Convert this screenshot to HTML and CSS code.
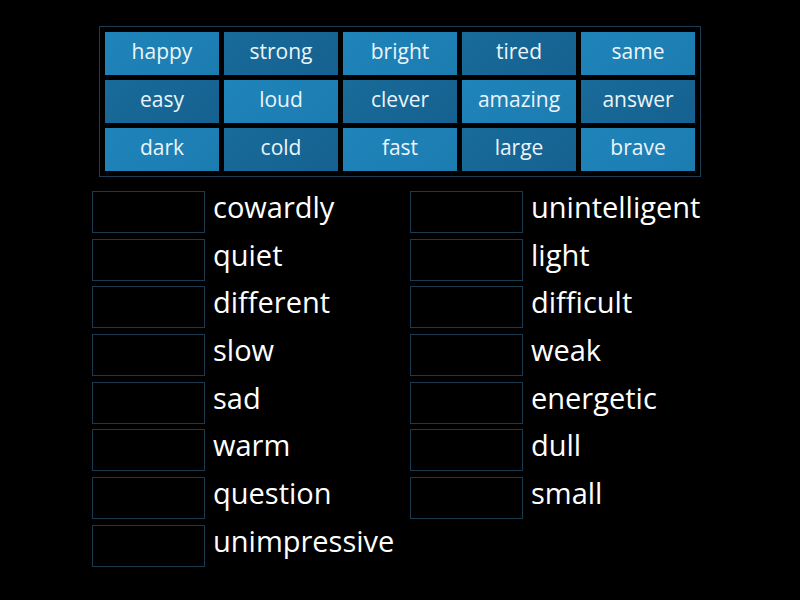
FILE: index.html
```html
<!DOCTYPE html>
<html>
<head>
<meta charset="utf-8">
<link rel="stylesheet" href="styles.css">
</head>
<body>
<div class="bank">
  <div class="tile light">happy</div>
  <div class="tile dark">strong</div>
  <div class="tile light">bright</div>
  <div class="tile dark">tired</div>
  <div class="tile light">same</div>
  <div class="tile dark">easy</div>
  <div class="tile light">loud</div>
  <div class="tile dark">clever</div>
  <div class="tile light">amazing</div>
  <div class="tile dark">answer</div>
  <div class="tile light">dark</div>
  <div class="tile dark">cold</div>
  <div class="tile light">fast</div>
  <div class="tile dark">large</div>
  <div class="tile light">brave</div>
</div>
<div class="answers">
  <div class="col">
    <div class="item"><div class="slot"></div><span class="word">cowardly</span></div>
    <div class="item"><div class="slot"></div><span class="word">quiet</span></div>
    <div class="item"><div class="slot"></div><span class="word">different</span></div>
    <div class="item"><div class="slot"></div><span class="word">slow</span></div>
    <div class="item"><div class="slot"></div><span class="word">sad</span></div>
    <div class="item"><div class="slot"></div><span class="word">warm</span></div>
    <div class="item"><div class="slot"></div><span class="word">question</span></div>
    <div class="item"><div class="slot"></div><span class="word">unimpressive</span></div>
  </div>
  <div class="col">
    <div class="item"><div class="slot"></div><span class="word">unintelligent</span></div>
    <div class="item"><div class="slot"></div><span class="word">light</span></div>
    <div class="item"><div class="slot"></div><span class="word">difficult</span></div>
    <div class="item"><div class="slot"></div><span class="word">weak</span></div>
    <div class="item"><div class="slot"></div><span class="word">energetic</span></div>
    <div class="item"><div class="slot"></div><span class="word">dull</span></div>
    <div class="item"><div class="slot"></div><span class="word">small</span></div>
  </div>
</div>
</body>
</html>
```
FILE: styles.css
```css
html, body {
  margin: 0;
  padding: 0;
  background: #000;
  font-family: "Open Sans", "DejaVu Sans", sans-serif;
  color: #fff;
}
body {
  width: 800px;
  height: 600px;
  overflow: hidden;
}
.bank {
  margin: 26px 0 0 99px;
  width: 590px;
  border: 1px solid #1f3c52;
  padding: 5px;
  display: grid;
  grid-template-columns: repeat(5, 114px);
  grid-auto-rows: 43px;
  gap: 5px;
}
.tile {
  display: flex;
  align-items: center;
  justify-content: center;
  font-size: 21px;
  color: #eaf5fb;
  padding-bottom: 5px;
  box-sizing: border-box;
}
.tile.light {
  background: linear-gradient(135deg, #1f84ba 0%, #1c7cb0 100%);
}
.tile.dark {
  background: linear-gradient(135deg, #196b99 0%, #156190 100%);
}
.answers {
  margin: 14px 0 0 92px;
  display: grid;
  grid-template-columns: 318px 318px;
}
.col {
  display: flex;
  flex-direction: column;
  gap: 5.7px;
}
.item {
  display: flex;
  align-items: center;
  height: 42px;
}
.slot {
  width: 113px;
  height: 42px;
  box-sizing: border-box;
  border: 1px solid #1c394e;
  flex: none;
}
.word {
  margin-left: 8px;
  font-size: 29px;
  line-height: 42px;
  position: relative;
  top: -5px;
}
```
